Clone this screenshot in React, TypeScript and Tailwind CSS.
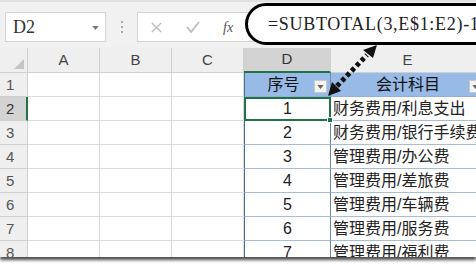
const rows = [
  { n: 1, e: "财务费用/利息支出" },
  { n: 2, e: "财务费用/银行手续费" },
  { n: 3, e: "管理费用/办公费" },
  { n: 4, e: "管理费用/差旅费" },
  { n: 5, e: "管理费用/车辆费" },
  { n: 6, e: "管理费用/服务费" },
  { n: 7, e: "管理费用/福利费" },
];

const cjk = "font-['Liberation_Sans','Noto_Sans_CJK_SC',sans-serif]";

function FilterButton() {
  return (
    <span className="absolute right-[3px] top-[7px] flex h-[13px] w-[13px] items-center justify-center border border-[#c8c8c8] bg-[#f4f4f4]">
      <svg viewBox="0 0 8 5" className="h-[4px] w-[7px]">
        <path d="M0 0h8L4 5z" fill="#666" />
      </svg>
    </span>
  );
}

function Toolbar() {
  return (
    <div className="flex h-[48px] items-start border-t-2 border-[#e2e2e2] bg-[#f1f1f1] pl-[5px] pt-[10px]">
      <div className="relative flex h-[30px] w-[101px] items-center border border-[#d4d4d4] bg-white pl-[7px]">
        <span className="font-['Liberation_Serif',serif] text-[18px] text-[#333]">D2</span>
        <svg viewBox="0 0 8 5" className="absolute right-[6px] top-[13px] h-[4px] w-[7px]">
          <path d="M0 0h8L4 5z" fill="#777" />
        </svg>
      </div>
      <div className="ml-[15px] mt-[9px] flex w-[3px] flex-col gap-[3px]">
        <span className="h-[2px] w-[2px] bg-[#aaa]" />
        <span className="h-[2px] w-[2px] bg-[#aaa]" />
        <span className="h-[2px] w-[2px] bg-[#aaa]" />
      </div>
      <div className="ml-[13px] flex h-[30px] flex-1 items-center border border-[#d4d4d4] bg-white">
        <svg viewBox="0 0 12 12" className="ml-[13px] h-[11px] w-[11px]">
          <path d="M1 1l10 10M11 1L1 11" stroke="#bdbdbd" strokeWidth="1.6" />
        </svg>
        <svg viewBox="0 0 14 12" className="ml-[24px] h-[12px] w-[14px]">
          <path d="M1 6l4 5L13 1" stroke="#bdbdbd" strokeWidth="1.8" fill="none" />
        </svg>
        <span className="ml-[23px] font-['Liberation_Serif',serif] text-[14px] italic text-[#555]">fx</span>
      </div>
    </div>
  );
}

function Callout() {
  return (
    <div className="absolute left-[245px] top-[3px] flex h-[42px] w-[270px] items-center rounded-[22px] border-[3px] border-black bg-white pl-[20px]">
      <span className="whitespace-nowrap font-['Liberation_Serif',serif] text-[18px] tracking-[0.7px] text-[#222]">
        =SUBTOTAL(3,E$1:E2)-1
      </span>
    </div>
  );
}

function Arrow() {
  return (
    <svg className="absolute left-0 top-0 h-[267px] w-[476px]" viewBox="0 0 476 267">
      <line x1="337" y1="86" x2="367" y2="55" stroke="#111" strokeWidth="5" strokeDasharray="4 3" />
      <polygon points="328,96 341,91 332,82" fill="#111" />
      <polygon points="377,45 373,58 363,50" fill="#111" />
    </svg>
  );
}

function Sheet() {
  const col = "flex items-center justify-center border-r border-b border-[#d0d0d0] bg-[#efefef] text-[15px] text-[#444]";
  const rowHead = "flex items-center justify-start pl-[6px] pt-[2px] border-r border-b border-[#d0d0d0] bg-[#efefef] text-[15px] text-[#555]";
  const blank = "border-r border-b border-[#dadada] bg-white";
  return (
    <div className={`h-[209px] overflow-hidden shadow-[0_3px_3px_rgba(0,0,0,0.7)] ${cjk}`}>
      <div className="grid w-[485px] grid-cols-[28px_72px_72px_72px_87px_154px] grid-rows-[25px_repeat(8,24px)]">
        <div className="relative border-r border-b border-[#d0d0d0] bg-[#efefef]">
          <svg viewBox="0 0 10 10" className="absolute bottom-[3px] right-[3px] h-[10px] w-[10px]">
            <path d="M10 0V10H0z" fill="#c4c4c4" />
          </svg>
        </div>
        <div className={col}>A</div>
        <div className={col}>B</div>
        <div className={col}>C</div>
        <div className="flex items-center justify-center border-r border-b-2 border-r-[#d0d0d0] border-b-[#217346] bg-[#d3d3d3] text-[15px] text-[#333]">D</div>
        <div className={col}>E</div>

        <div className={rowHead}>1</div>
        <div className={blank} />
        <div className={blank} />
        <div className={blank} />
        <div className="relative flex items-center justify-center border-b border-l border-r border-l-[#4d6f8e] border-r-[#6b8cb0] border-b-[#8fb0d6] bg-[#97bbe6] pr-[8px] text-[16px] text-[#111]">
          序号
          <FilterButton />
        </div>
        <div className="relative flex items-center justify-center border-b border-[#8fb0d6] bg-[#97bbe6] text-[16px] text-[#111]">
          会计科目
          <FilterButton />
        </div>

        {rows.map((r, i) => (
          <div key={r.n} className="contents">
            <div
              className={
                i === 0
                  ? "flex items-center pl-[6px] pt-[2px] border-r-2 border-b border-r-[#217346] border-b-[#d0d0d0] bg-[#d3d3d3] text-[15px] text-[#333]"
                  : rowHead
              }
            >
              {i + 2}
            </div>
            <div className={blank} />
            <div className={blank} />
            <div className={blank} />
            <div
              className={
                i === 0
                  ? "relative flex items-center justify-center border-2 border-[#217346] bg-white text-[16px] text-[#222]"
                  : "flex items-center justify-center border-b border-l border-r border-l-[#4d6f8e] border-r-[#6b8cb0] border-b-[#a9bcd3] bg-white text-[16px] text-[#222]"
              }
            >
              {r.n}
              {i === 0 && <span className="absolute -bottom-[4px] -right-[4px] h-[6px] w-[6px] border border-white bg-[#217346]" />}
            </div>
            <div className="flex items-center whitespace-nowrap border-b border-[#a9bcd3] bg-white pl-[2px] text-[16px] text-[#222]">
              {r.e}
            </div>
          </div>
        ))}
      </div>
    </div>
  );
}

export default function App() {
  return (
    <div className="relative h-[267px] w-[476px] overflow-hidden bg-white">
      <Toolbar />
      <Sheet />
      <Callout />
      <Arrow />
    </div>
  );
}
